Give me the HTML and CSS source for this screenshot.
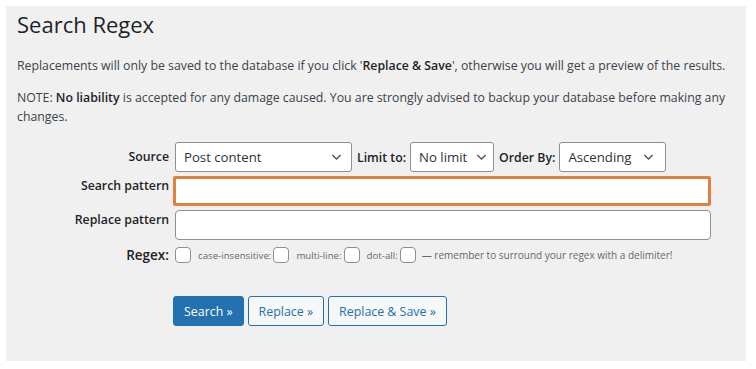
FILE: index.html
```html
<!DOCTYPE html>
<html>
<head>
  <title>Search Regex</title>
  <link rel="stylesheet" href="styles.css">
</head>
<body>
  <div class="wrap">
    <h1>Search Regex</h1>
    <p>Replacements will only be saved to the database if you click '<strong>Replace &amp; Save</strong>', otherwise you will get a preview of the results.</p>
    <p>NOTE: <strong>No liability</strong> is accepted for any damage caused. You are strongly advised to backup your database before making any changes.</p>

    <form class="form">
      <div class="label mid">Source</div>
      <div class="field inline">
        <div class="select source">
          <select><option>Post content</option></select>
          <svg viewBox="0 0 12 8"><path d="M1.5 1.8 6 6.2 10.5 1.8"/></svg>
        </div>
        <span class="inline-label">Limit to:</span>
        <div class="select limit">
          <select><option>No limit</option></select>
          <svg viewBox="0 0 12 8"><path d="M1.5 1.8 6 6.2 10.5 1.8"/></svg>
        </div>
        <span class="inline-label">Order By:</span>
        <div class="select order">
          <select><option>Ascending</option></select>
          <svg viewBox="0 0 12 8"><path d="M1.5 1.8 6 6.2 10.5 1.8"/></svg>
        </div>
      </div>

      <div class="label">Search pattern</div>
      <div class="field"><input type="text" class="text focus"></div>

      <div class="label">Replace pattern</div>
      <div class="field"><input type="text" class="text"></div>

      <div class="label mid regex">Regex:</div>
      <div class="field inline flags">
        <input type="checkbox" class="check">
        <span class="small">case-insensitive:</span><input type="checkbox" class="check">
        <span class="small">multi-line:</span><input type="checkbox" class="check">
        <span class="small">dot-all:</span><input type="checkbox" class="check">
        <span class="small note">— remember to surround your regex with a delimiter!</span>
      </div>

      <div></div>
      <div class="field buttons">
        <button type="button" class="button primary">Search »</button>
        <button type="button" class="button">Replace »</button>
        <button type="button" class="button">Replace &amp; Save »</button>
      </div>
    </form>
  </div>
</body>
</html>
```

FILE: styles.css
```css
body {
  margin: 0;
  background: #fff;
  font-family: "Open Sans", "Noto Sans", sans-serif;
  font-size: 12.3px;
  color: #3c434a;
}

.wrap {
  margin: 6px 10px 8px 6px;
  height: 355px;
  box-sizing: border-box;
  padding: 4px 11px 0 11px;
  background: #f0f0f1;
}

h1 {
  margin: 0 0 17px 0;
  font-size: 22px;
  font-weight: 400;
  line-height: 29px;
  color: #1d2327;
}

p {
  margin: 0 0 13px 0;
  line-height: 19px;
}

strong {
  font-weight: 600;
  color: #1d2327;
}

.form {
  display: grid;
  grid-template-columns: 152px 538px;
  column-gap: 4px;
  row-gap: 4px;
  margin-top: 16px;
}

.label {
  text-align: right;
  font-weight: 600;
  color: #1d2327;
  line-height: 18px;
  padding-top: 1px;
}

.label.mid {
  align-self: center;
  padding-top: 0;
}

.label.regex {
  font-size: 13.5px;
}

.field.inline {
  display: flex;
  align-items: center;
}

.inline-label {
  font-weight: 600;
  color: #1d2327;
  margin: 0 4px 0 5px;
}

.select {
  position: relative;
  height: 30px;
}

.select.source {
  margin-left: 2px;
}

.select select {
  appearance: none;
  height: 30px;
  width: 100%;
  box-sizing: border-box;
  border: 1px solid #8c8f94;
  border-radius: 3px;
  background: #fff;
  font-family: inherit;
  font-size: 13.2px;
  color: #2c3338;
  padding: 0 24px 0 8px;
}

.select svg {
  position: absolute;
  right: 10px;
  top: 11px;
  width: 11px;
  height: 8px;
  fill: none;
  stroke: #50575e;
  stroke-width: 1.6;
  pointer-events: none;
}

.source { width: 177px; }
.limit { width: 84px; }
.limit svg { right: 7px; }
.order { width: 107px; }
.order svg { right: 12px; }

.text {
  display: block;
  width: 536px;
  height: 30px;
  box-sizing: border-box;
  margin-left: 2px;
  border: 1px solid #8c8f94;
  border-radius: 4px;
  background: #fff;
}

.text.focus {
  margin-left: 0;
  width: 538px;
  border: 3px solid #e0813f;
  border-radius: 2px;
}

.flags {
  margin-top: 0;
  height: 22px;
}

.check {
  appearance: none;
  width: 16px;
  height: 16px;
  margin: 0 0 0 2px;
  border: 1px solid #8c8f94;
  border-radius: 4px;
  background: #fff;
}

.small {
  font-size: 9.7px;
  color: #646970;
  margin: 0 0 0 7px;
}

.small.note {
  font-size: 10px;
  margin-left: 6px;
}

.buttons {
  display: flex;
  gap: 4px;
  margin-top: 26px;
}

.button {
  height: 30px;
  padding: 0 10px;
  font-family: inherit;
  font-size: 12.4px;
  border: 1px solid #2271b1;
  border-radius: 3px;
  background: #f6f7f7;
  color: #2271b1;
}

.button.primary {
  background: #2271b1;
  color: #fff;
}
```
